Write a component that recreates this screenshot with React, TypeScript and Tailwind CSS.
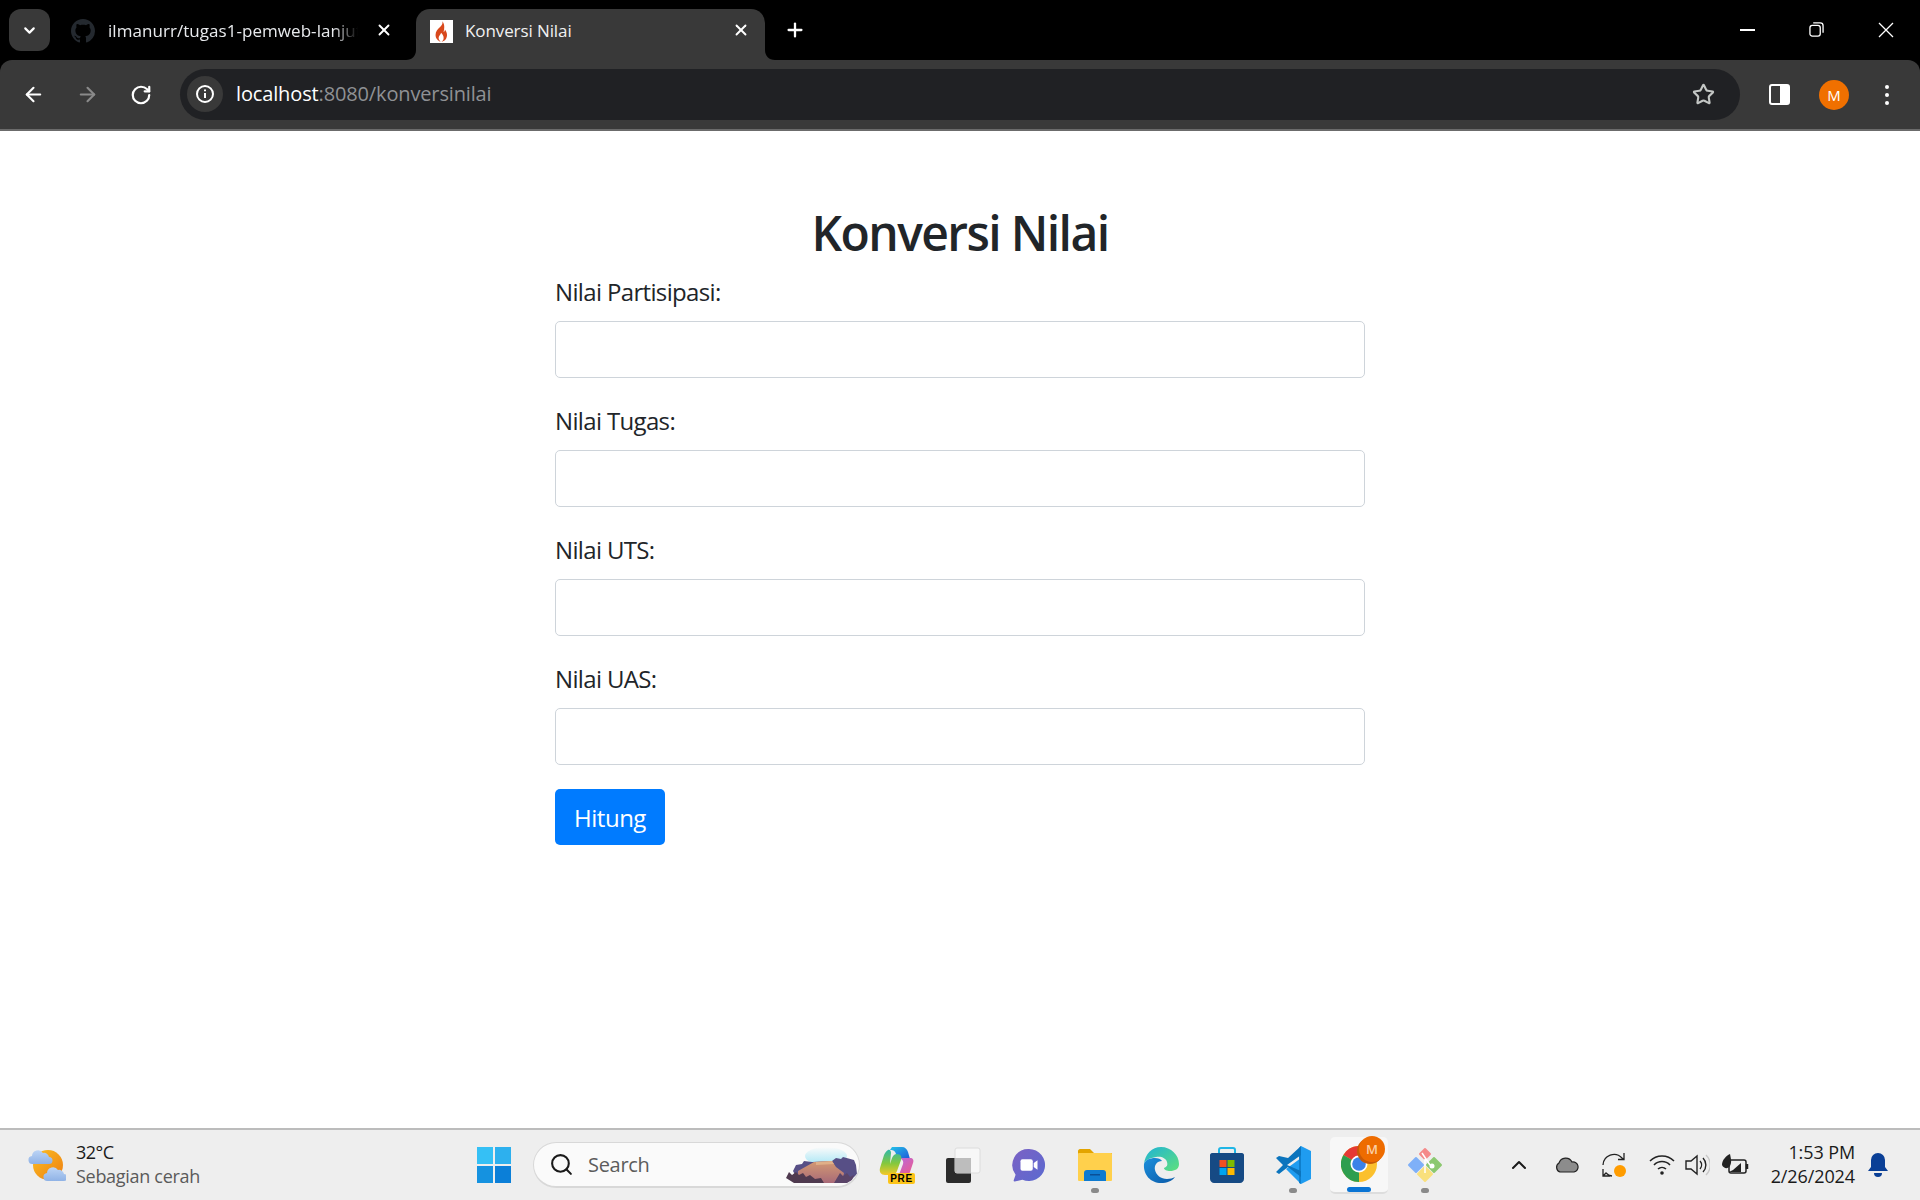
import { ChevronDown, ChevronUp, X, Plus, ArrowLeft, ArrowRight, RotateCw, Star, Search } from 'lucide-react'

const FONT = "font-['Open_Sans',sans-serif]"

function GithubMark() {
  return (
    <svg viewBox="0 0 16 16" className="w-[24px] h-[24px] shrink-0" fill="#24292f">
      <path d="M8 0C3.58 0 0 3.58 0 8c0 3.54 2.29 6.53 5.47 7.59.4.07.55-.17.55-.38 0-.19-.01-.82-.01-1.49-2.01.37-2.53-.49-2.69-.94-.09-.23-.48-.94-.82-1.13-.28-.15-.68-.52-.01-.53.63-.01 1.08.58 1.23.82.72 1.21 1.87.87 2.33.66.07-.52.28-.87.51-1.07-1.78-.2-3.64-.89-3.64-3.95 0-.87.31-1.59.82-2.15-.08-.2-.36-1.02.08-2.12 0 0 .67-.21 2.2.82.64-.18 1.32-.27 2-.27s1.36.09 2 .27c1.53-1.04 2.2-.82 2.2-.82.44 1.1.16 1.92.08 2.12.51.56.82 1.27.82 2.15 0 3.07-1.87 3.75-3.65 3.95.29.25.54.73.54 1.48 0 1.07-.01 1.93-.01 2.2 0 .21.15.46.55.38A8.01 8.01 0 0 0 16 8c0-4.42-3.58-8-8-8z" />
    </svg>
  )
}

function Flame() {
  return (
    <div className="w-[23px] h-[23px] bg-white flex items-center justify-center shrink-0">
      <svg viewBox="0 0 20 24" className="w-[17px] h-[21px]" fill="#d8481c">
        <path d="M11 0c1 3-1 5-3 7C5.500 9.500 3 12 3 16c0 4 3 7 6 8-2-1.500-3-3.500-2-6 .6-1.500 2-2.500 2.500-4.500 1.500 1.500 3 3.500 3 6 0 2-1 3.500-2.500 4.500 3.500-.5 6.500-3.500 6.500-8 0-3-1.500-5-2.500-6.500 0 1.500-.5 2.500-1.500 3C13.500 8 14 4 11 0z" />
      </svg>
    </div>
  )
}

function CopilotIcon() {
  return (
    <div className="relative w-[36px] h-[36px]">
      <svg viewBox="0 0 36 36" className="w-[36px] h-[36px]">
        <defs>
          <linearGradient id="cpa" x1="0" y1="0" x2="1" y2="1">
            <stop offset="0" stopColor="#22c3e8" />
            <stop offset="1" stopColor="#1f55d8" />
          </linearGradient>
          <linearGradient id="cpb" x1="0" y1="0" x2="1" y2="1">
            <stop offset="0" stopColor="#b06ae8" />
            <stop offset="1" stopColor="#f25a86" />
          </linearGradient>
          <linearGradient id="cpc" x1="0" y1="0" x2="0" y2="1">
            <stop offset="0" stopColor="#2fb9a8" />
            <stop offset="0.55" stopColor="#86c83c" />
            <stop offset="1" stopColor="#f5c828" />
          </linearGradient>
        </defs>
        <path d="M13 0h10c3 0 5 2 6 5l2 7H19l-2-5c-1-3-2-4-6-4z" fill="url(#cpa)" />
        <path d="M20 11h11c3 0 4 2 3 5l-3 9c-1 3-3 4-6 4H15c3 0 5-1 6-4l3-8c1-3-1-5-4-6z" fill="url(#cpb)" />
        <path d="M9 3c-2 1-3 3-4 5L1 21c-1 4 1 7 5 7h7c3 0 4-2 5-4l4-11c1-3 0-6-4-6-3 0-4 2-5 4l-2 6 1-11c0-2-1-4-3-3z" fill="url(#cpc)" />
      </svg>
      <span className="absolute left-[9px] top-[26px] w-[27px] h-[11px] bg-[#fcc419] rounded-[2px] text-[10px] leading-[11px] font-bold tracking-[0.6px] text-black text-center font-['Liberation_Sans',sans-serif]">
        PRE
      </span>
    </div>
  )
}

function TaskViewIcon() {
  return (
    <svg viewBox="0 0 36 36" className="w-[36px] h-[36px]">
      <rect x="1" y="11" width="25" height="25" rx="2" fill="#2b2b2b" />
      <rect x="10" y="1" width="25" height="25" rx="2" fill="#f7f7f7" stroke="#dcdcdc" />
      <rect x="10" y="11" width="16" height="15" fill="#bdbdbd" />
    </svg>
  )
}

function ChatIcon() {
  return (
    <svg viewBox="0 0 36 36" className="w-[34px] h-[36px]">
      <defs>
        <linearGradient id="chat" x1="0" y1="0" x2="1" y2="1">
          <stop offset="0" stopColor="#7b61c4" />
          <stop offset="1" stopColor="#5a6ad0" />
        </linearGradient>
      </defs>
      <path d="M18 1a17 17 0 1 1-7 32.500L3 35.500c-1 .2-1.500-.5-1.200-1.300l2-6A17 17 0 0 1 18 1z" fill="url(#chat)" />
      <rect x="9" y="12" width="13" height="12" rx="2" fill="#fff" />
      <path d="M23 16l4-3v10l-4-3z" fill="#fff" />
    </svg>
  )
}

function ExplorerIcon() {
  return (
    <svg viewBox="0 0 36 34" className="w-[36px] h-[34px]">
      <path d="M1 3c0-1 1-2 2-2h10l4 4h18v6H1z" fill="#e3a400" />
      <rect x="1" y="5" width="34" height="28" rx="1" fill="#ffd04c" />
      <path d="M7 33v-8c0-2 1-3 3-3h16c2 0 3 1 3 3v8z" fill="#0f7bd0" />
      <rect x="13" y="26" width="10" height="1.500" fill="#0a4f96" />
    </svg>
  )
}

function EdgeIcon() {
  return (
    <svg viewBox="0 0 36 36" className="w-[36px] h-[36px]">
      <defs>
        <linearGradient id="edgea" x1="0" y1="0" x2="1" y2="1">
          <stop offset="0" stopColor="#1fb3d6" />
          <stop offset="1" stopColor="#5fe07c" />
        </linearGradient>
        <linearGradient id="edgeb" x1="0" y1="0" x2="1" y2="1">
          <stop offset="0" stopColor="#1b8fdc" />
          <stop offset="1" stopColor="#0b5aa8" />
        </linearGradient>
      </defs>
      <path d="M1 17C2 7 9 0 18 0c10 0 18 8 18 17 0 5-4 7-9 7-3 0-6-1-6-3 3-1 4-3 3-6-1-4-6-6-11-5C7 11 2 13 1 17z" fill="url(#edgea)" />
      <path d="M1 17c1-4 6-6 11-6 3 0 6 1 7 3-5 0-8 4-7 9 1 5 6 9 12 9 3 0 6-1 8-2-3 4-8 6-14 6C8 36 0 28 1 17z" fill="url(#edgeb)" />
    </svg>
  )
}

function StoreIcon() {
  return (
    <svg viewBox="0 0 34 36" className="w-[34px] h-[36px]">
      <path d="M9 7V3c0-1 1-2 2-2h12c1 0 2 1 2 2v4" fill="none" stroke="#1fb6e6" strokeWidth="2" />
      <path d="M0 8c0-1 1-2 2-2h30c1 0 2 1 2 2v24c0 2-2 4-4 4H4c-2 0-4-2-4-4z" fill="#164a84" />
      <rect x="9.500" y="13" width="7" height="7" fill="#f25022" />
      <rect x="17.500" y="13" width="7" height="7" fill="#7fba00" />
      <rect x="9.500" y="21" width="7" height="7" fill="#00a4ef" />
      <rect x="17.500" y="21" width="7" height="7" fill="#ffb900" />
    </svg>
  )
}

function VscodeIcon() {
  return (
    <svg viewBox="0 0 36 38" className="w-[36px] h-[38px]">
      <path d="M26 0l10 5v28l-10 5-15-15 15-11z" fill="#1f9cf0" />
      <path d="M26 0v38l-2-1V2z" fill="#0f7fcc" />
      <path d="M4 10l-3 2 7 7-7 7 3 2 9-7 13 10v-6L12 19 26 9V0L13 12z" fill="#0b74bd" />
    </svg>
  )
}

function ChromeIcon() {
  return (
    <div className="relative w-[36px] h-[36px]">
      <svg viewBox="0 0 36 36" className="w-[36px] h-[36px]">
        <circle cx="18" cy="18" r="18" fill="#fbc02d" />
        <path d="M18 18L2.400 9A18 18 0 0 1 33.600 9z" fill="#e53935" />
        <path d="M18 18L2.400 9A18 18 0 0 0 18 36z" fill="#2e9e4f" />
        <circle cx="18" cy="18" r="8.500" fill="#fff" />
        <circle cx="18" cy="18" r="6.800" fill="#3b82e8" />
      </svg>
      <span className="absolute left-[18px] top-[-10px] w-[26px] h-[26px] rounded-full bg-[#ee6c00] shadow-[-2px_2px_0_#c85a08] text-[#fbd0a8] text-[13px] leading-[26px] text-center font-semibold">
        M
      </span>
    </div>
  )
}

function GitIcon() {
  return (
    <svg viewBox="0 0 36 36" className="w-[36px] h-[36px]" strokeLinejoin="round" strokeWidth="2">
      <path d="M9 11l7 7-7 7-7-7z" fill="#7fb0f8" stroke="#7fb0f8" />
      <path d="M18 2l5 5-5 5-5-5z" fill="#f58a8a" stroke="#f58a8a" />
      <path d="M27 11l7 7-7 7-7-7z" fill="#8cc870" stroke="#8cc870" />
      <path d="M18 20l7 7-7 7-7-7z" fill="#f9e07c" stroke="#f9e07c" />
      <path d="M15 6l8 12M18 12v14" stroke="#fff" strokeWidth="1.500" />
      <circle cx="25" cy="19" r="2.500" fill="#fff" stroke="none" />
    </svg>
  )
}

function BrowserChrome() {
  return (
    <header className={`bg-black text-white shrink-0 ${FONT}`}>
      {/* tab strip */}
      <div className="h-[60px] flex items-start pt-[9px]">
        <div className="ml-[9px] w-[41px] h-[42px] rounded-[12px] bg-[#393939] flex items-center justify-center shrink-0">
          <ChevronDown className="w-[17px] h-[17px]" strokeWidth={3} />
        </div>
        <div className="w-[366px] h-[42px] pl-[21px] pr-[23px] pt-[2px] flex items-center shrink-0">
          <GithubMark />
          <span className="ml-[13px] w-[250px] overflow-hidden whitespace-nowrap text-[17px] tracking-[0.05px] text-[#e8eaed] [mask-image:linear-gradient(to_right,black_90%,transparent)]">
            ilmanurr/tugas1-pemweb-lanjut
          </span>
          <X className="ml-auto w-[18px] h-[18px] mt-[-2px]" strokeWidth={2.5} />
        </div>
        <div className="relative w-[349px] h-[51px] bg-[#393939] rounded-t-[14px] pl-[14px] pr-[15px] pb-[7px] flex items-center shrink-0">
          <svg viewBox="0 0 10 10" className="absolute left-[-10px] bottom-0 w-[10px] h-[10px]" fill="#393939">
            <path d="M10 0v10H0c6 0 10-4 10-10z" />
          </svg>
          <svg viewBox="0 0 10 10" className="absolute right-[-10px] bottom-0 w-[10px] h-[10px]" fill="#393939">
            <path d="M0 0v10h10C4 10 0 6 0 0z" />
          </svg>
          <Flame />
          <span className="ml-[12px] text-[17px] tracking-[-0.1px] text-[#f1f1f1]">Konversi Nilai</span>
          <X className="ml-auto w-[18px] h-[18px] mt-[-2px]" strokeWidth={2.5} />
        </div>
        <Plus className="ml-[19px] mt-[10px] w-[22px] h-[22px] shrink-0" strokeWidth={2.5} />
        {/* window controls */}
        <div className="ml-auto flex items-center gap-[54px] pr-[26px] pt-[11px] h-[20px] mt-[5px]">
          <div className="w-[15px] h-[2px] bg-white" />
          <svg viewBox="0 0 16 16" className="w-[15px] h-[15px]" fill="none" stroke="#fff" strokeWidth="1.400">
            <rect x="1" y="3.500" width="11" height="11.500" rx="2.500" />
            <path d="M4.500 1h7.500a3 3 0 0 1 3 3v7.500" />
          </svg>
          <svg viewBox="0 0 16 16" className="w-[16px] h-[16px]" stroke="#fff" strokeWidth="1.300">
            <path d="M1 1l14 14M15 1L1 15" />
          </svg>
        </div>
      </div>
      {/* toolbar */}
      <div className="h-[71px] bg-[#393939] rounded-t-[12px] border-b-2 border-[#6b6b6b] flex items-center">
        <div className="flex items-center w-[180px] pl-[22px] gap-[31px] shrink-0">
          <ArrowLeft className="w-[23px] h-[23px]" strokeWidth={2.2} />
          <ArrowRight className="w-[23px] h-[23px] text-[#8a8a8a]" strokeWidth={2.2} />
          <RotateCw className="w-[22px] h-[22px]" strokeWidth={2.4} />
        </div>
        <div className="w-[1560px] h-[51px] mt-[-1px] rounded-full bg-[#202124] flex items-center pl-[7px] pr-[25px] shrink-0">
          <div className="w-[36px] h-[36px] rounded-full bg-[#393939] flex items-center justify-center">
            <svg viewBox="0 0 20 20" className="w-[20px] h-[20px]" fill="none" stroke="#fff" strokeWidth="2">
              <circle cx="10" cy="10" r="8" />
              <path d="M10 9v5M10 5.500v1.800" />
            </svg>
          </div>
          <span className="ml-[13px] text-[20px] tracking-[-0.14px] text-white">
            localhost<span className="text-[#8f9194]">:8080/konversinilai</span>
          </span>
          <Star className="ml-auto w-[23px] h-[23px] text-[#c4c7c5]" strokeWidth={2.2} />
        </div>
        <div className="flex-1 flex items-center pl-[29px] gap-[29px]">
          <div className="w-[21px] h-[21px] rounded-[3px] border-2 border-white flex justify-end">
            <div className="w-[8px] bg-white" />
          </div>
          <div className="w-[30px] h-[30px] rounded-full bg-[#f07000] text-[#fff] text-[15px] leading-[30px] text-center">M</div>
          <div className="ml-[7px] flex flex-col gap-[4px]">
            <div className="w-[4px] h-[4px] rounded-full bg-white" />
            <div className="w-[4px] h-[4px] rounded-full bg-white" />
            <div className="w-[4px] h-[4px] rounded-full bg-white" />
          </div>
        </div>
      </div>
    </header>
  )
}

function Field({ label }: { label: string }) {
  return (
    <div className="mb-[24px]">
      <label className="block h-[36px] mb-[12px] pt-[1px] text-[24px] leading-[36px] tracking-[-0.65px] text-[#212529]">{label}</label>
      <input className="block w-full h-[57px] rounded-[5px] border border-[#ced4da] bg-white" />
    </div>
  )
}

function ConversionForm() {
  return (
    <main className={`flex-1 bg-white ${FONT}`}>
      <div className="w-[810px] mx-auto pt-[72px]">
        <h1 className="text-center text-[48px] leading-[58px] pt-[1px] h-[58px] tracking-[-1.6px] font-semibold text-[#212529] mb-[12px]">Konversi Nilai</h1>
        <Field label="Nilai Partisipasi:" />
        <Field label="Nilai Tugas:" />
        <Field label="Nilai UTS:" />
        <Field label="Nilai UAS:" />
        <button className="block w-[110px] h-[56px] pt-[2px] rounded-[5px] bg-[#007bff] text-white text-[24px] tracking-[-0.5px]">Hitung</button>
      </div>
    </main>
  )
}

function Taskbar() {
  return (
    <footer className={`h-[72px] shrink-0 bg-[#eeeeee] border-t-2 border-[#bcbcbc] flex items-center ${FONT}`}>
      {/* weather */}
      <div className="w-[477px] pl-[28px] flex items-center shrink-0">
        <svg viewBox="0 0 38 36" className="w-[38px] h-[36px]">
          <defs>
            <linearGradient id="wsun" x1="0" y1="0" x2="1" y2="1">
              <stop offset="0" stopColor="#fbbf24" />
              <stop offset="1" stopColor="#ee7d10" />
            </linearGradient>
            <linearGradient id="wcloud" x1="0" y1="0" x2="0" y2="1">
              <stop offset="0" stopColor="#bcd4f5" />
              <stop offset="1" stopColor="#8fb2e6" />
            </linearGradient>
          </defs>
          <circle cx="20" cy="18" r="15" fill="url(#wsun)" />
          <path d="M5 17a4 4 0 0 1-1-8 6 6 0 0 1 11-3 5 5 0 0 1 6 4 3.500 3.500 0 0 1 0 7z" fill="url(#wcloud)" />
          <path d="M20 34a4 4 0 0 1-1-8 6 6 0 0 1 11-3 5 5 0 0 1 6 4 3.500 3.500 0 0 1 0 7z" fill="url(#wcloud)" />
        </svg>
        <div className="ml-[10px] mt-[-3px] leading-none">
          <div className="text-[18px] leading-[24px] tracking-[-0.5px] text-[#1a1a1a]">32°C</div>
          <div className="text-[18px] leading-[24px] tracking-[-0.3px] text-[#5a5a5a]">Sebagian cerah</div>
        </div>
      </div>
      {/* start + search */}
      <div className="grid grid-cols-2 gap-[2px] w-[34px] h-[36px] shrink-0">
        <div className="bg-[#35c0f5]" />
        <div className="bg-[#2db0ee]" />
        <div className="bg-[#1592e0]" />
        <div className="bg-[#0b7fd8]" />
      </div>
      <div className="ml-[22px] w-[327px] h-[46px] rounded-full bg-[#fafafa] border border-[#d8d8d8] border-b-2 flex items-center pl-[15px] pr-[2px] shrink-0 overflow-hidden">
        <Search className="w-[25px] h-[25px] text-[#1a1a1a]" strokeWidth={2} />
        <span className="ml-[14px] text-[20px] tracking-[-0.3px] text-[#5c5c5c]">Search</span>
        <svg viewBox="0 0 71 36" className="ml-auto w-[71px] h-[36px]">
          <defs>
            <linearGradient id="sky" x1="0" y1="0" x2="0" y2="1">
              <stop offset="0" stopColor="#fafafa" />
              <stop offset="1" stopColor="#a8e6f5" />
            </linearGradient>
            <linearGradient id="mesa" x1="0" y1="0" x2="0" y2="1">
              <stop offset="0" stopColor="#d49a72" />
              <stop offset="1" stopColor="#a86a78" />
            </linearGradient>
          </defs>
          <ellipse cx="40" cy="9" rx="21" ry="9" fill="url(#sky)" />
          <path d="M7 24l3-6 6-1 2-3 8 1 20-1 4-3 5 1 2-2 11 3 2 5 1 9-7 7-50 3z" fill="#574f86" />
          <path d="M12 24l16-9 18-1 4 6 8 6-2 10H12z" fill="url(#mesa)" />
          <path d="M30 15l16-1 2 3-18 1z" fill="#e0b088" />
          <path d="M0 31l3-6 3 3 4-3 3 3 4-2 3 4 4-2 5 4 6-1 3 5H8z" fill="#4f3a4f" />
          <path d="M48 36l6-10 3 3 4-3 3 4 4-2-2 5-5 3z" fill="#5a4468" />
        </svg>
      </div>
      {/* pinned apps */}
      <div className="flex items-center shrink-0">
        <TaskIcon className="ml-[4px]"><CopilotIcon /></TaskIcon>
        <TaskIcon><TaskViewIcon /></TaskIcon>
        <TaskIcon><ChatIcon /></TaskIcon>
        <TaskIcon dot><ExplorerIcon /></TaskIcon>
        <TaskIcon><EdgeIcon /></TaskIcon>
        <TaskIcon><StoreIcon /></TaskIcon>
        <TaskIcon dot><VscodeIcon /></TaskIcon>
        <div className="relative w-[58px] h-[57px] mx-[4px] rounded-[5px] bg-[#f7f7f7] border-b-2 border-[#dddddd] flex items-center justify-center">
          <ChromeIcon />
          <div className="absolute bottom-[0px] left-[17px] w-[24px] h-[5px] rounded-full bg-[#0a74d4]" />
        </div>
        <TaskIcon dot><GitIcon /></TaskIcon>
      </div>
      {/* tray */}
      <div className="flex-1 flex items-center text-[#1a1a1a]">
        <ChevronUp className="ml-[49px] w-[24px] h-[24px]" strokeWidth={2} />
        <svg viewBox="0 0 26 18" className="ml-[23px] w-[26px] h-[18px]">
          <path d="M6 16a5 5 0 0 1-1-9 7 7 0 0 1 13-1 5 5 0 0 1 2 10z" fill="#8c8c8c" stroke="#222" strokeWidth="1.200" />
        </svg>
        <svg viewBox="0 0 26 26" className="ml-[22px] w-[26px] h-[26px]" fill="none" stroke="#222" strokeWidth="1.300">
          <path d="M1 13A11 11 0 0 1 20 6l2 1.500M22 1v6.500h-6" />
          <path d="M1 17v7h7M1 24l3-3a10 10 0 0 0 6 3" />
          <circle cx="18" cy="19" r="6" fill="#ff9c00" stroke="none" />
        </svg>
        <svg viewBox="0 0 26 22" className="ml-[21px] w-[26px] h-[22px]" fill="none" stroke="#222" strokeWidth="1.600">
          <path d="M1 7a17 17 0 0 1 24 0M5 11a11 11 0 0 1 16 0M9 15a6 6 0 0 1 8 0" />
          <circle cx="13" cy="19" r="1.800" fill="#222" stroke="none" />
        </svg>
        <svg viewBox="0 0 26 24" className="ml-[9px] w-[26px] h-[24px]" fill="none" stroke="#222" strokeWidth="1.400">
          <path d="M2 8h5l6-5v18l-6-5H2z" />
          <path d="M16 8a6 6 0 0 1 0 8M19 5a10 10 0 0 1 0 14" />
          <path d="M22 2a14 14 0 0 1 0 20" stroke="#c8c8c8" />
        </svg>
        <svg viewBox="0 0 28 24" className="ml-[11px] w-[28px] h-[24px]" fill="none" stroke="#222" strokeWidth="1.500">
          <rect x="8" y="7" width="17" height="13" rx="2" />
          <path d="M26 11v5" strokeWidth="2.500" />
          <path d="M1 12c0-5 4-9 8-11 1 5 2 8 0 12-2 3-6 3-8-1z" fill="#222" stroke="none" />
          <path d="M12 17l8-7v9h-12z" fill="#222" stroke="none" />
        </svg>
        <div className="ml-auto mt-[-2px] text-right text-[18px] leading-[24px] tracking-[-0.1px] text-[#1a1a1a] whitespace-nowrap">
          <div>1:53 PM</div>
          <div>2/26/2024</div>
        </div>
        <svg viewBox="0 0 20 24" className="ml-[13px] mr-[32px] w-[20px] h-[24px]" fill="#0a3f96">
          <path d="M10 0a7 7 0 0 1 7 7v7l3 4H0l3-4V7a7 7 0 0 1 7-7z" />
          <path d="M6 20h8a4 4 0 0 1-8 0z" />
        </svg>
      </div>
    </footer>
  )
}

function TaskIcon({ children, dot, className = '' }: { children: React.ReactNode; dot?: boolean; className?: string }) {
  return (
    <div className={`relative w-[66px] h-[57px] flex items-center justify-center ${className}`}>
      {children}
      {dot && <div className="absolute bottom-[1px] left-[29px] w-[8px] h-[5px] rounded-full bg-[#8a8a8a]" />}
    </div>
  )
}

export default function App() {
  return (
    <div className="w-[1920px] h-[1200px] flex flex-col overflow-hidden">
      <BrowserChrome />
      <ConversionForm />
      <Taskbar />
    </div>
  )
}
